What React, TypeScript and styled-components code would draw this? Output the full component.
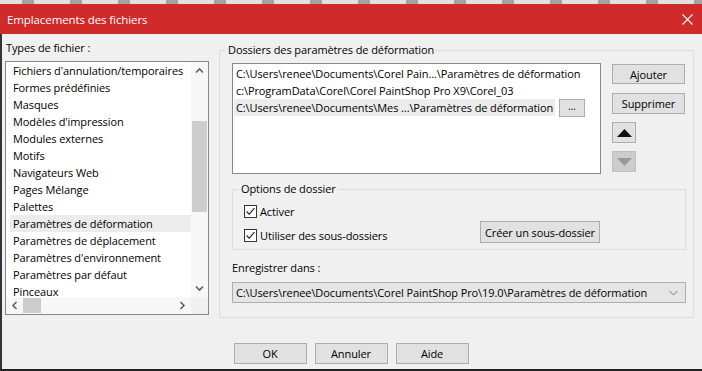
import styled, { createGlobalStyle } from "styled-components";

const GlobalStyle = createGlobalStyle`
  html, body { margin: 0; padding: 0; background: #f0f0f0; }
  body {
    font-family: "Open Sans", "Noto Sans", Arial, sans-serif;
    font-size: 11px;
    letter-spacing: -0.1px;
    color: #000;
  }
  * { box-sizing: border-box; }
`;

const FILE_TYPES = [
  "Fichiers d'annulation/temporaires",
  "Formes prédéfinies",
  "Masques",
  "Modèles d'impression",
  "Modules externes",
  "Motifs",
  "Navigateurs Web",
  "Pages Mélange",
  "Palettes",
  "Paramètres de déformation",
  "Paramètres de déplacement",
  "Paramètres d'environnement",
  "Paramètres par défaut",
  "Pinceaux",
];

const SELECTED_TYPE = "Paramètres de déformation";

const FOLDERS = [
  "C:\\Users\\renee\\Documents\\Corel Pain...\\Paramètres de déformation",
  "c:\\ProgramData\\Corel\\Corel PaintShop Pro X9\\Corel_03",
  "C:\\Users\\renee\\Documents\\Mes ...\\Paramètres de déformation",
];

const Window = styled.div`
  width: 702px;
  height: 371px;
  display: flex;
  flex-direction: column;
  overflow: hidden;
`;

const BehindStrip = styled.div`
  height: 4px;
  flex: 0 0 4px;
  background: repeating-linear-gradient(
    90deg,
    #e2e2e2 0 22px,
    #a4a4a4 22px 34px,
    #e2e2e2 34px 48px
  );
`;

const TitleBar = styled.div`
  height: 30px;
  flex: 0 0 30px;
  background: #d02a2a;
  color: #fff;
  display: flex;
  align-items: center;
  justify-content: space-between;
  padding: 0 9px 0 7px;
  font-size: 11.5px;
`;

const CloseIcon = styled.svg`
  width: 11px;
  height: 11px;
  display: block;
`;

const Body = styled.div`
  flex: 1;
  background: #f0f0f0;
  border-left: 2px solid #333;
  border-bottom: 2px solid #222;
  display: flex;
  flex-direction: column;
`;

const Main = styled.div`
  display: flex;
  align-items: flex-start;
  padding: 6px 0 0 3px;
`;

const LeftColumn = styled.div`
  width: 204px;
  display: flex;
  flex-direction: column;
`;

const Label = styled.div<{ $indent?: number }>`
  height: 16px;
  line-height: 16px;
  padding-left: ${(p) => p.$indent ?? 0}px;
  white-space: nowrap;
`;

const TypeList = styled.div`
  margin-top: 5px;
  height: 254px;
  border: 1px solid #828790;
  background: #fff;
  display: grid;
  grid-template-columns: 1fr 17px;
  grid-template-rows: 1fr 17px;
`;

const TypeItems = styled.div`
  overflow: hidden;
`;

const TypeItem = styled.div<{ $selected?: boolean }>`
  height: 17px;
  line-height: 17px;
  margin-left: 4px;
  padding-left: 3px;
  white-space: nowrap;
  background: ${(p) => (p.$selected ? "#ececec" : "transparent")};
`;

const VScroll = styled.div`
  background: #f7f7f7;
  display: flex;
  flex-direction: column;
  align-items: center;
`;

const ScrollArrow = styled.div`
  width: 17px;
  height: 17px;
  display: flex;
  align-items: center;
  justify-content: center;
  flex: 0 0 17px;
`;

const VTrack = styled.div`
  flex: 1;
  width: 17px;
  display: flex;
  flex-direction: column;
  padding-top: 42px;
`;

const VThumb = styled.div`
  width: 15px;
  margin-left: 1px;
  height: 91px;
  background: #cdcdcd;
`;

const HScroll = styled.div`
  background: #f7f7f7;
  display: flex;
  align-items: center;
`;

const HTrack = styled.div`
  flex: 1;
  height: 17px;
  display: flex;
  align-items: center;
`;

const HThumb = styled.div`
  width: 18px;
  height: 15px;
  background: #cdcdcd;
`;

const Corner = styled.div`
  background: #f0f0f0;
`;

const Group = styled.fieldset`
  margin: 0;
  border: 1px solid #dcdcdc;
  padding: 5px 7px 14px 6px;
  min-width: 0;
`;

const Legend = styled.legend`
  padding: 0 2px;
  line-height: 16px;
  height: 16px;
`;

const OuterGroup = styled(Group)`
  width: 475px;
  margin-left: 10px;
  margin-top: 2px;
`;

const Inner = styled.div`
  padding-left: 6px;
  display: flex;
  flex-direction: column;
`;

const FolderRow = styled.div`
  display: flex;
  align-items: flex-start;
  gap: 11px;
`;

const FolderList = styled.div`
  width: 369px;
  height: 111px;
  border: 1px solid #828790;
  background: #fff;
  padding: 1px 0 0 1px;
`;

const FolderItem = styled.div`
  display: flex;
  align-items: center;
  height: 17px;
  white-space: nowrap;
`;

const FolderText = styled.span<{ $selected?: boolean }>`
  display: inline-block;
  height: 17px;
  line-height: 17px;
  padding: 0 2px;
  background: ${(p) => (p.$selected ? "#ececec" : "transparent")};
`;

const SideButtons = styled.div`
  display: flex;
  flex-direction: column;
  align-items: flex-start;
  padding-top: 1px;
`;

const Button = styled.button<{ $w: number; $h?: number; $mt?: number }>`
  width: ${(p) => p.$w}px;
  height: ${(p) => p.$h ?? 21}px;
  margin-top: ${(p) => p.$mt ?? 0}px;
  background: #e1e1e1;
  border: 1px solid #adadad;
  border-radius: 0;
  font: inherit;
  letter-spacing: inherit;
  color: #000;
  padding: 0;
  display: flex;
  align-items: center;
  justify-content: center;
  white-space: nowrap;
`;

const ArrowButton = styled(Button)<{ $disabled?: boolean }>`
  background: ${(p) => (p.$disabled ? "#cccccc" : "#e1e1e1")};
  border-color: ${(p) => (p.$disabled ? "#bfbfbf" : "#adadad")};
`;

const BrowseButton = styled(Button)`
  margin-left: 4px;
  font-size: 10px;
  padding-bottom: 3px;
`;

const OptionsGroup = styled(Group)`
  width: 454px;
  margin-top: 7px;
  padding: 6px;
`;

const OptionsBody = styled.div`
  display: flex;
  align-items: flex-end;
  padding-left: 5px;
`;

const CheckColumn = styled.div`
  width: 236px;
  display: flex;
  flex-direction: column;
  gap: 8px;
`;

const CheckRow = styled.label`
  display: flex;
  align-items: center;
  gap: 3px;
  height: 16px;
  white-space: nowrap;
`;

const CheckBox = styled.span`
  width: 13px;
  height: 13px;
  flex: 0 0 13px;
  border: 1px solid #333;
  background: #fff;
  display: flex;
  align-items: center;
  justify-content: center;
`;

const SaveLabel = styled(Label)`
  margin-top: 10px;
`;

const Combo = styled.div`
  margin-top: 6px;
  width: 454px;
  height: 21px;
  background: #e5e5e5;
  border: 1px solid #adadad;
  display: flex;
  align-items: center;
  justify-content: space-between;
  padding: 0 7px 0 3px;
  white-space: nowrap;
`;

const Footer = styled.div`
  display: flex;
  justify-content: center;
  gap: 8px;
  margin-top: 25px;
  padding-right: 2px;
`;

function Chevron({ dir }: { dir: "up" | "down" | "left" | "right" }) {
  const rot = { up: 0, right: 90, down: 180, left: 270 }[dir];
  return (
    <svg width="9" height="9" viewBox="0 0 9 9" style={{ transform: `rotate(${rot}deg)` }}>
      <path d="M1 6.5 L4.5 3 L8 6.5" fill="none" stroke="#606060" strokeWidth="1.6" />
    </svg>
  );
}

function ThinChevron() {
  return (
    <svg width="9" height="6" viewBox="0 0 9 6">
      <path d="M0.5 1 L4.5 5 L8.5 1" fill="none" stroke="#777" strokeWidth="1" />
    </svg>
  );
}

function Triangle({ color, down }: { color: string; down?: boolean }) {
  return (
    <svg width="15" height="8" viewBox="0 0 15 8">
      <path d={down ? "M0 0 H15 L7.5 8 Z" : "M0 8 H15 L7.5 0 Z"} fill={color} />
    </svg>
  );
}

function Check() {
  return (
    <svg width="11" height="11" viewBox="0 0 11 11">
      <path d="M1.5 5.5 L4.2 8.2 L9.5 2.2" fill="none" stroke="#222" strokeWidth="1.1" />
    </svg>
  );
}

export default function App() {
  return (
    <>
      <GlobalStyle />
      <Window>
        <BehindStrip />
        <TitleBar>
          <span>Emplacements des fichiers</span>
          <CloseIcon viewBox="0 0 11 11">
            <path d="M0.5 0.5 L10.5 10.5 M10.5 0.5 L0.5 10.5" stroke="#fff" strokeWidth="1.1" />
          </CloseIcon>
        </TitleBar>
        <Body>
          <Main>
            <LeftColumn>
              <Label $indent={1}>Types de fichier :</Label>
              <TypeList>
                <TypeItems>
                  {FILE_TYPES.map((t) => (
                    <TypeItem key={t} $selected={t === SELECTED_TYPE}>
                      {t}
                    </TypeItem>
                  ))}
                </TypeItems>
                <VScroll>
                  <ScrollArrow>
                    <Chevron dir="up" />
                  </ScrollArrow>
                  <VTrack>
                    <VThumb />
                  </VTrack>
                  <ScrollArrow>
                    <Chevron dir="down" />
                  </ScrollArrow>
                </VScroll>
                <HScroll>
                  <ScrollArrow>
                    <Chevron dir="left" />
                  </ScrollArrow>
                  <HTrack>
                    <HThumb />
                  </HTrack>
                  <ScrollArrow>
                    <Chevron dir="right" />
                  </ScrollArrow>
                </HScroll>
                <Corner />
              </TypeList>
            </LeftColumn>

            <OuterGroup>
              <Legend>Dossiers des paramètres de déformation</Legend>
              <Inner>
                <FolderRow>
                  <FolderList>
                    {FOLDERS.map((f, i) => (
                      <FolderItem key={f}>
                        <FolderText $selected={i === 2}>{f}</FolderText>
                        {i === 2 && (
                          <BrowseButton $w={26} $h={18}>
                            ...
                          </BrowseButton>
                        )}
                      </FolderItem>
                    ))}
                  </FolderList>
                  <SideButtons>
                    <Button $w={73} $h={20}>Ajouter</Button>
                    <Button $w={73} $h={21} $mt={9}>Supprimer</Button>
                    <ArrowButton $w={24} $h={21} $mt={8}>
                      <Triangle color="#111" />
                    </ArrowButton>
                    <ArrowButton $w={24} $h={21} $mt={8} $disabled>
                      <Triangle color="#9a9a9a" down />
                    </ArrowButton>
                  </SideButtons>
                </FolderRow>

                <OptionsGroup>
                  <Legend>Options de dossier</Legend>
                  <OptionsBody>
                    <CheckColumn>
                      <CheckRow>
                        <CheckBox>
                          <Check />
                        </CheckBox>
                        Activer
                      </CheckRow>
                      <CheckRow>
                        <CheckBox>
                          <Check />
                        </CheckBox>
                        Utiliser des sous-dossiers
                      </CheckRow>
                    </CheckColumn>
                    <Button $w={120} $h={22}>Créer un sous-dossier</Button>
                  </OptionsBody>
                </OptionsGroup>

                <SaveLabel>Enregistrer dans :</SaveLabel>
                <Combo>
                  <span>C:\Users\renee\Documents\Corel PaintShop Pro\19.0\Paramètres de déformation</span>
                  <ThinChevron />
                </Combo>
              </Inner>
            </OuterGroup>
          </Main>

          <Footer>
            <Button $w={73}>OK</Button>
            <Button $w={73}>Annuler</Button>
            <Button $w={73}>Aide</Button>
          </Footer>
        </Body>
      </Window>
    </>
  );
}
